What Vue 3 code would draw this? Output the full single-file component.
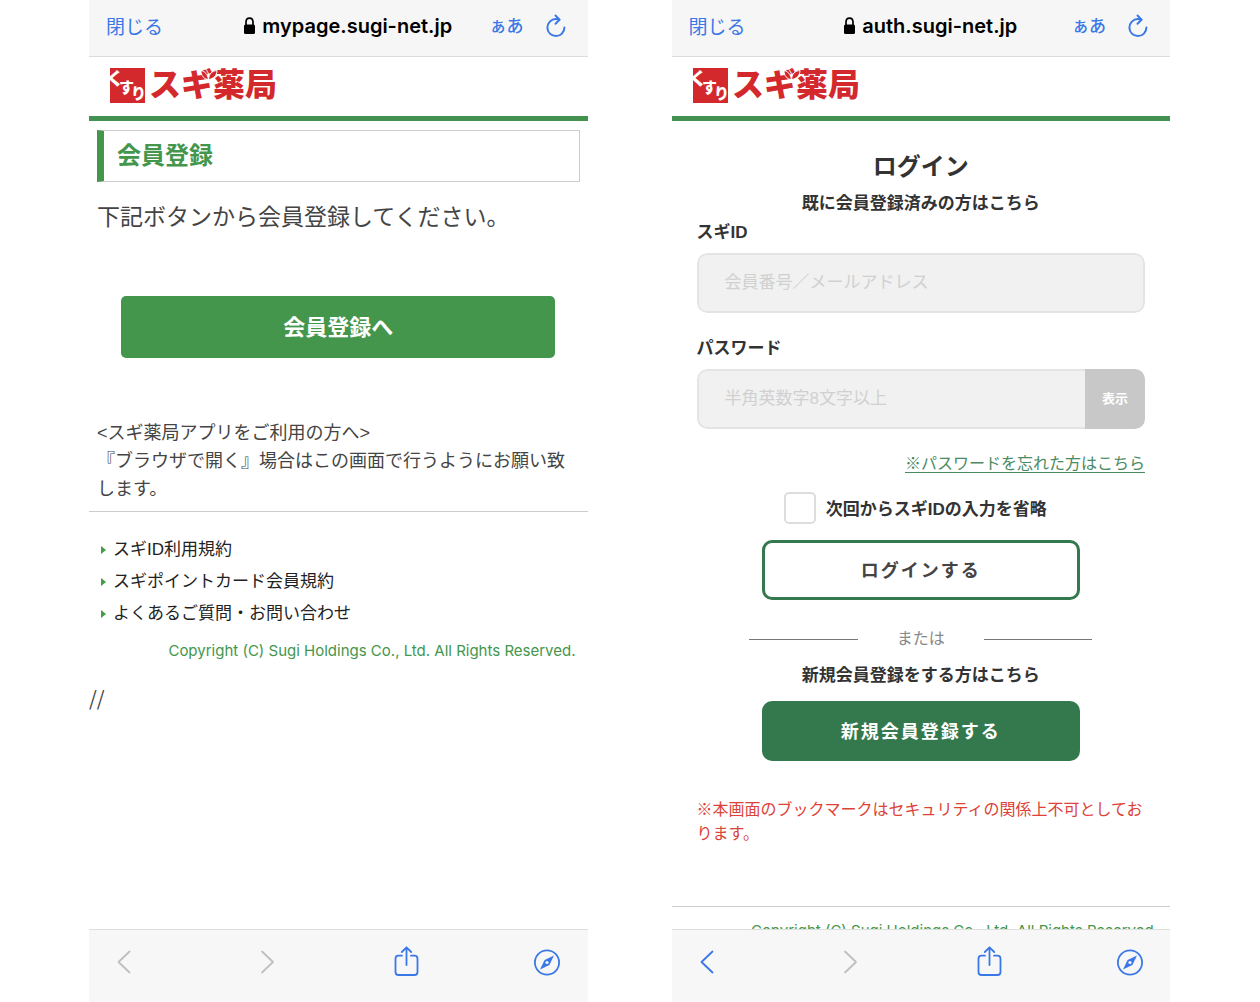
<template>
  <div class="wrapper">
    <section v-for="screen in screens" :key="screen.id" class="phone">
      <header class="browser-bar">
        <button class="bar-button close">閉じる</button>
        <div class="address">
          <svg class="lock" viewBox="0 0 13 18" aria-hidden="true">
            <path d="M3 8V5.2C3 2.9 4.4 1.2 6.5 1.2S10 2.9 10 5.2V8" fill="none" stroke="#000" stroke-width="1.7" />
            <rect x="1" y="7.5" width="11" height="9.5" rx="1.6" fill="#000" />
          </svg>
          <span>{{ screen.host }}</span>
        </div>
        <div class="bar-tools">
          <button class="bar-button translate">ぁあ</button>
          <button class="bar-button" aria-label="再読み込み">
            <svg class="reload" viewBox="0 0 20 24" fill="none" stroke="currentColor" stroke-width="2" stroke-linecap="round" stroke-linejoin="round" aria-hidden="true">
              <path d="M13.400 5.600C11.500 5.100 10.500 5.100 9.800 5.100A8.500 8.500 0 1 0 18.400 13.600" />
              <path d="M9.500 1.500l4 4.200L9.500 9.800" />
            </svg>
          </button>
        </div>
      </header>

      <main class="page">
        <div class="site-header">
          <svg class="logo" viewBox="0 0 168 36">
            <rect width="35" height="35" fill="#d3292d" />
            <g class="logo-mark">
              <text x="-4" y="17" font-size="18">く</text>
              <text x="9" y="25" font-size="15">す</text>
              <text x="21" y="31" font-size="15">り</text>
            </g>
            <text class="logo-name" x="39" y="28">スギ薬局</text>
            <path d="M98.500 11.500C97.500 6 95 3.500 91 2.500C91 8 94 11 98.500 11.500zC99 6 101.500 3 107 2.500C107 7.500 103.500 11 98.500 11.500z" fill="#d3292d" stroke="#fff" />
          </svg>
        </div>

        <div v-if="screen.id === 'mypage'" class="register">
          <h1 class="register-title">会員登録</h1>
          <p class="lead">下記ボタンから会員登録してください。</p>
          <button class="register-button">会員登録へ</button>
          <p class="app-note">&lt;スギ薬局アプリをご利用の方へ&gt;<br>『ブラウザで開く』場合はこの画面で行うようにお願い致します。</p>
          <ul class="links">
            <li v-for="link in links" :key="link">
              <a href="#">{{ link }}</a>
            </li>
          </ul>
          <p class="copyright">{{ copyright }}</p>
          <p class="slashes">//</p>
        </div>

        <div v-else class="login">
          <form class="login-form" @submit.prevent>
            <h1 class="login-title">ログイン</h1>
            <p class="sub-title">既に会員登録済みの方はこちら</p>
            <label class="field-label" for="sugi-id">スギID</label>
            <div class="field">
              <input id="sugi-id" v-model="sugiId" type="text" placeholder="会員番号／メールアドレス">
            </div>
            <label class="field-label second" for="password">パスワード</label>
            <div class="field">
              <input id="password" v-model="password" :type="showPassword ? 'text' : 'password'" placeholder="半角英数字8文字以上">
              <button type="button" class="show-button" @click="showPassword = !showPassword">表示</button>
            </div>
            <a class="forgot" href="#">※パスワードを忘れた方はこちら</a>
            <label class="remember">
              <input v-model="remember" type="checkbox">
              <span>次回からスギIDの入力を省略</span>
            </label>
            <button class="action">ログインする</button>
            <div class="divider">または</div>
            <p class="sub-title">新規会員登録をする方はこちら</p>
            <button type="button" class="action filled">新規会員登録する</button>
            <p class="warning">※本画面のブックマークはセキュリティの関係上不可としております。</p>
          </form>
          <p class="copyright">{{ copyright }}</p>
        </div>
      </main>

      <nav class="toolbar">
        <button class="bar-button" :disabled="!screen.canGoBack" aria-label="戻る">
          <svg viewBox="0 0 26 32" class="tool-icon" aria-hidden="true">
            <path d="M18.500 5.500L7.500 16l11 10.500" />
          </svg>
        </button>
        <button class="bar-button" disabled aria-label="進む">
          <svg viewBox="0 0 26 32" class="tool-icon" aria-hidden="true">
            <path d="M10 5.500L21 16l-11 10.500" />
          </svg>
        </button>
        <button class="bar-button" aria-label="共有">
          <svg viewBox="0 0 26 32" class="tool-icon" aria-hidden="true">
            <path d="M9 9.700H5.500a3 3 0 0 0-3 3V26a3 3 0 0 0 3 3h16a3 3 0 0 0 3-3V12.700a3 3 0 0 0-3-3H18" />
            <path d="M13.500 19V1.500M8.800 6l4.700-4.700L18.200 6" />
          </svg>
        </button>
        <button class="bar-button" aria-label="Safariで開く">
          <svg viewBox="0 0 26 32" class="tool-icon" aria-hidden="true">
            <circle cx="13" cy="16.500" r="12.100" />
            <path d="M20 9.500l-4.600 9.400L6 23.500l4.600-9.400z" fill="currentColor" stroke="none" />
            <circle cx="13" cy="16.500" r="1.600" fill="#f7f7f7" stroke="none" />
          </svg>
        </button>
      </nav>
    </section>
  </div>
</template>

<script setup>
import {ref} from "vue";

const screens = [
  {
    id: 'mypage',
    host: 'mypage.sugi-net.jp',
    canGoBack: false
  },
  {
    id: 'auth',
    host: 'auth.sugi-net.jp',
    canGoBack: true
  },
]
const links = [
  'スギID利用規約',
  'スギポイントカード会員規約',
  'よくあるご質問・お問い合わせ',
]
const copyright = 'Copyright (C) Sugi Holdings Co., Ltd. All Rights Reserved.'

const sugiId = ref('')
const password = ref('')
const showPassword = ref(false)
const remember = ref(false)
</script>

<style>
body {
  margin: 0;
  background-color: #fff;
}
</style>

<style scoped>
* {
  box-sizing: border-box;
}

.wrapper {
  display: grid;
  grid-template-columns: 1fr 1fr;
  column-gap: 84px;
  padding: 0 90px 0 89px;
  font-family: "Liberation Sans", "Noto Sans CJK JP", sans-serif;
  color: #444;
  text-spacing-trim: space-all;
}

.phone {
  display: flex;
  flex-direction: column;
  height: 100vh;
  min-width: 0;
}

h1, p, ul {
  margin: 0;
  padding: 0;
}

button, input {
  font-family: inherit;
}

button {
  cursor: pointer;
}

/* browser chrome */

.browser-bar {
  display: grid;
  grid-template-columns: 1fr auto 1fr;
  align-items: center;
  height: 57px;
  flex: none;
  padding: 0 22px 4px 17px;
  background-color: #f6f6f6;
  border-bottom: 1px solid #dcdcdc;
}

.bar-button {
  display: flex;
  padding: 0;
  border: none;
  background: none;
  color: #3b78e7;
}

.bar-button:disabled {
  color: #bfbfbf;
  cursor: default;
}

.close {
  padding-top: 3px;
  font-size: 19px;
  line-height: 28px;
}

.address {
  display: flex;
  align-items: center;
  gap: 6px;
  padding-left: 24px;
  font-family: Inter, sans-serif;
  font-size: 20px;
  font-weight: 600;
  line-height: 28px;
  color: #000;
}

.lock {
  width: 13px;
  height: 18px;
}

.bar-tools {
  display: flex;
  justify-content: flex-end;
  align-items: center;
  gap: 22px;
}

.translate {
  padding-top: 2px;
  font-size: 17px;
  font-weight: 500;
  line-height: 28px;
}

.reload {
  width: 20px;
  height: 24px;
}

.toolbar {
  display: flex;
  justify-content: space-between;
  align-items: flex-start;
  height: 73px;
  flex: none;
  padding: 16px 27px 0 22px;
  background-color: #f7f7f7;
  border-top: 1px solid #dcdfdc;
}

.tool-icon {
  width: 26px;
  height: 32px;
  fill: none;
  stroke: currentColor;
  stroke-width: 1.8;
  stroke-linecap: round;
  stroke-linejoin: round;
}

/* site */

.page {
  flex: 1;
  min-height: 0;
  overflow-y: auto;
  scrollbar-width: none;
}

.site-header {
  height: 64px;
  padding: 11px 21px 0;
  border-bottom: 5px solid #44924f;
}

.logo {
  display: block;
  width: 168px;
  height: 36px;
  overflow: visible;
  font-family: "Noto Sans CJK JP", sans-serif;
  font-weight: 900;
}

.logo-mark {
  fill: #fff;
}

.logo-name {
  font-size: 32px;
  fill: #d3292d;
}

.register {
  padding-top: 9px;
}

.register-title {
  margin: 0 8px;
  padding-left: 13px;
  border: 1px solid #ccc;
  border-left: 7px solid #44964c;
  font-size: 24px;
  font-weight: 700;
  line-height: 50px;
  color: #44964c;
}

.lead {
  margin: 19px 8px 0;
  font-size: 23px;
  line-height: 32px;
}

.register-button {
  display: block;
  width: 87%;
  height: 62px;
  margin: 63px auto 0;
  padding: 0 0 4px;
  border: none;
  border-radius: 5px;
  background-color: #44964c;
  color: #fff;
  font-size: 22px;
  font-weight: 700;
}

.app-note {
  margin-top: 61px;
  padding: 0 8px 8px;
  border-bottom: 1px solid #ccc;
  font-size: 18px;
  line-height: 28px;
}

.links {
  padding: 22px 12px 0;
  list-style: none;
  font-size: 17px;
  line-height: 32px;
}

.links li {
  display: flex;
  align-items: center;
  gap: 7px;
}

.links li::before {
  content: "";
  border-left: 5px solid #3f9f45;
  border-top: 4px solid transparent;
  border-bottom: 4px solid transparent;
}

.links a {
  color: #222;
  text-decoration: none;
}

.copyright {
  padding: 9px 12px 0;
  font-family: Inter, sans-serif;
  font-size: 15px;
  line-height: 24px;
  text-align: right;
  color: #44964c;
}

.slashes {
  margin-top: 21px;
  font-family: "Noto Sans CJK JP", sans-serif;
  font-size: 20px;
  line-height: 28px;
}

.login-form {
  display: flex;
  flex-direction: column;
  padding: 28px 25px 60px;
  color: #333;
}

.login-title {
  font-size: 24px;
  font-weight: 700;
  line-height: 36px;
  text-align: center;
}

.sub-title {
  margin-top: 7px;
  font-size: 17px;
  font-weight: 700;
  line-height: 24px;
  text-align: center;
}

.field-label {
  margin: 5px 0 8px;
  font-size: 17px;
  font-weight: 700;
  line-height: 24px;
}

.field-label.second {
  margin-top: 24px;
}

.field {
  display: flex;
  height: 60px;
  border-radius: 10px;
  overflow: hidden;
}

.field input {
  flex: 1;
  min-width: 0;
  padding: 0 26px;
  border: 2px solid #e4e4e4;
  border-radius: 10px;
  background-color: #f1f1f1;
  color: #333;
  font-size: 17px;
  outline: none;
}

.field input:not(:last-child) {
  border-right: none;
  border-radius: 10px 0 0 10px;
}

.field input::placeholder {
  color: #d0d0d0;
}

.show-button {
  width: 60px;
  padding: 0 0 4px;
  border: none;
  background-color: #c8c8c8;
  color: #fff;
  font-size: 13px;
  font-weight: 700;
}

.forgot {
  align-self: flex-end;
  margin-top: 23px;
  font-size: 16px;
  line-height: 24px;
  color: #4a8a62;
  text-underline-offset: 3px;
}

.remember {
  display: flex;
  align-items: center;
  align-self: center;
  gap: 10px;
  margin: 16px 0;
  padding-right: 11px;
  font-size: 17px;
  font-weight: 700;
}

.remember span {
  padding-bottom: 2px;
}

.remember input {
  appearance: none;
  width: 32px;
  height: 32px;
  margin: 0;
  border: 2px solid #ddd;
  border-radius: 5px;
  background-color: #fff;
}

.remember input:checked {
  background-color: #34794e;
}

.action {
  align-self: center;
  width: 71%;
  height: 60px;
  padding: 0 0 2px;
  border: 3px solid #34794e;
  border-radius: 10px;
  background-color: #fff;
  color: #444;
  font-size: 18px;
  font-weight: 700;
  letter-spacing: 2px;
}

.action.filled {
  margin-top: 13px;
  background-color: #34794e;
  color: #fff;
}

.divider {
  display: flex;
  align-items: center;
  align-self: center;
  gap: 39px;
  width: 343px;
  max-width: 100%;
  margin: 27px 0 6px;
  font-size: 16px;
  line-height: 24px;
  color: #888;
}

.divider::before,
.divider::after {
  content: "";
  flex: 1;
  height: 1px;
  background-color: #777;
}

.warning {
  margin-top: 37px;
  font-size: 16px;
  line-height: 24px;
  color: #dc4238;
}

.login .copyright {
  padding: 12px;
  border-top: 1px solid #ccc;
}
</style>
